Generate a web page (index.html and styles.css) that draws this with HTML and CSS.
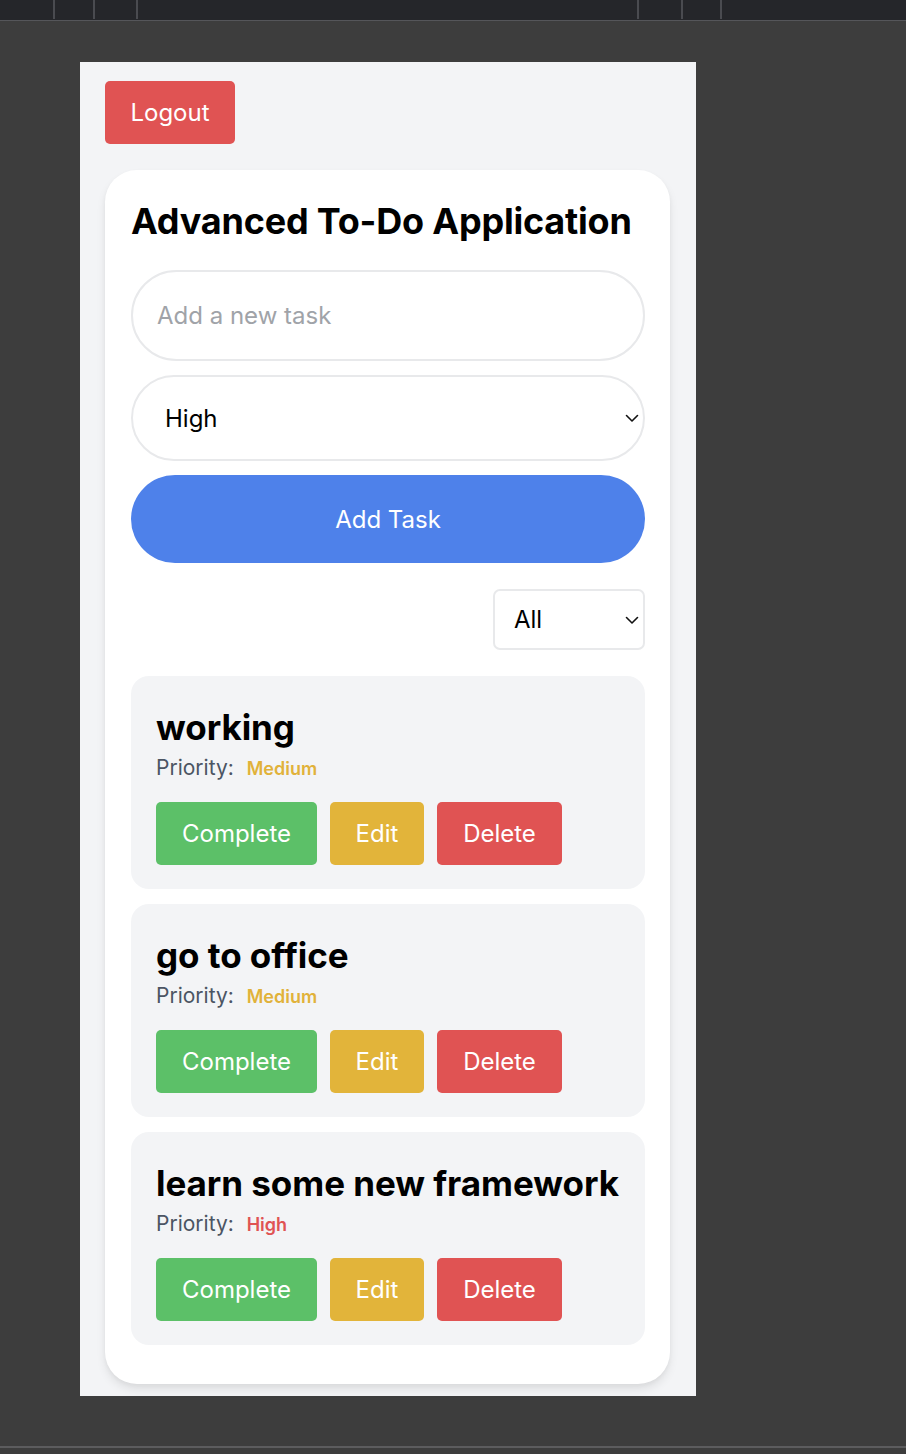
FILE: index.html
```html
<!DOCTYPE html>
<html lang="en">
<head>
<meta charset="utf-8">
<title>Advanced To-Do Application</title>
<link rel="stylesheet" href="styles.css">
</head>
<body>
<div class="topbar">
  <span class="tick t1"></span><span class="tick t2"></span><span class="tick t3"></span>
  <span class="tick t4"></span><span class="tick t5"></span><span class="tick t6"></span>
</div>
<div class="workspace">
  <div class="frame">
    <button class="logout">Logout</button>
    <div class="app">
      <h1 class="title">Advanced To-Do Application</h1>
      <input class="task-input" type="text" placeholder="Add a new task">
      <div class="select-wrap big">
        <select class="priority-select"><option>High</option><option>Medium</option><option>Low</option></select>
        <svg class="chev" width="14" height="9" viewBox="0 0 14 9"><path d="M1.5 1.5 L7 7 L12.5 1.5" fill="none" stroke="#111" stroke-width="1.6" stroke-linecap="round" stroke-linejoin="round"/></svg>
      </div>
      <button class="add-btn">Add Task</button>
      <div class="filter-row">
        <div class="select-wrap small">
          <select class="filter-select"><option>All</option><option>Completed</option><option>Pending</option></select>
          <svg class="chev" width="14" height="9" viewBox="0 0 14 9"><path d="M1.5 1.5 L7 7 L12.5 1.5" fill="none" stroke="#111" stroke-width="1.6" stroke-linecap="round" stroke-linejoin="round"/></svg>
        </div>
      </div>
      <ul class="tasks">
        <li class="task">
          <h3 class="task-title">working</h3>
          <p class="priority">Priority: <span class="level medium">Medium</span></p>
          <div class="actions">
            <button class="btn complete">Complete</button>
            <button class="btn edit">Edit</button>
            <button class="btn delete">Delete</button>
          </div>
        </li>
        <li class="task">
          <h3 class="task-title">go to office</h3>
          <p class="priority">Priority: <span class="level medium">Medium</span></p>
          <div class="actions">
            <button class="btn complete">Complete</button>
            <button class="btn edit">Edit</button>
            <button class="btn delete">Delete</button>
          </div>
        </li>
        <li class="task">
          <h3 class="task-title">learn some new framework</h3>
          <p class="priority">Priority: <span class="level high">High</span></p>
          <div class="actions">
            <button class="btn complete">Complete</button>
            <button class="btn edit">Edit</button>
            <button class="btn delete">Delete</button>
          </div>
        </li>
      </ul>
    </div>
  </div>
</div>
<div class="bottombar"></div>
</body>
</html>
```

FILE: styles.css
```css
* { box-sizing: border-box; }
html, body { margin: 0; padding: 0; }
body {
  width: 906px;
  height: 1454px;
  background: #3d3d3d;
  font-family: Inter, "Noto Sans", "Liberation Sans", sans-serif;
  overflow: hidden;
}
.topbar {
  position: relative;
  height: 21px;
  background: #25262a;
  border-bottom: 1px solid #55565a;
}
.tick {
  position: absolute;
  top: 0;
  width: 2px;
  height: 19px;
  background: #4a4b50;
}
.t1 { left: 53px; } .t2 { left: 93px; } .t3 { left: 136px; }
.t4 { left: 637px; } .t5 { left: 681px; } .t6 { left: 720px; }
.workspace {
  height: 1426px;
  padding-top: 41px;
  padding-left: 80px;
}
.frame {
  width: 616px;
  height: 1334px;
  background: #f3f4f6;
  padding: 19px 25px 0 25px;
}
.logout {
  display: block;
  width: 130px;
  height: 63px;
  background: #e05353;
  color: #fff;
  border: none;
  border-radius: 5px;
  font-family: inherit;
  font-size: 24px;
  padding: 0;
}
.app {
  margin-top: 26px;
  width: 565px;
  background: #fff;
  border-radius: 32px;
  box-shadow: 0 6px 10px rgba(0,0,0,0.08), 0 2px 4px rgba(0,0,0,0.04);
  padding: 29px 25px 39px 26px;
}
.title {
  margin: 0;
  font-size: 36px;
  line-height: 44px;
  font-weight: 700;
  color: #000;
  letter-spacing: -0.2px;
  white-space: nowrap;
}
.task-input {
  display: block;
  margin-top: 27px;
  width: 514px;
  height: 91px;
  border: 2px solid #e8e9eb;
  border-radius: 46px;
  padding: 0 0 0 24px;
  font-family: inherit;
  font-size: 24px;
  color: #111;
  background: #fff;
  outline: none;
}
.task-input::placeholder { color: #a0a3a8; }
.select-wrap { position: relative; }
.select-wrap.big { margin-top: 14px; width: 514px; height: 86px; }
.select-wrap select {
  appearance: none;
  -webkit-appearance: none;
  width: 100%;
  height: 100%;
  background: #fff;
  font-family: inherit;
  font-size: 24px;
  color: #000;
  outline: none;
}
.priority-select {
  border: 2px solid #e8e9eb;
  border-radius: 43px;
  padding: 0 0 0 32px;
}
.chev { position: absolute; right: 6px; top: 50%; margin-top: -4px; }
.add-btn {
  display: block;
  margin-top: 14px;
  width: 514px;
  height: 88px;
  background: #4e81ea;
  border: none;
  border-radius: 44px;
  color: #fff;
  font-family: inherit;
  font-size: 24px;
  padding: 0;
}
.filter-row {
  margin-top: 26px;
  width: 514px;
  display: flex;
  justify-content: flex-end;
}
.select-wrap.small { width: 152px; height: 61px; }
.filter-select {
  border: 2px solid #e8e9eb;
  border-radius: 7px;
  padding: 0 0 0 19px;
}
.tasks {
  list-style: none;
  margin: 26px 0 0 0;
  padding: 0;
  width: 514px;
  display: flex;
  flex-direction: column;
  gap: 15px;
}
.task {
  background: #f3f4f6;
  border-radius: 18px;
  padding: 29px 25px 24px 25px;
  height: 213px;
}
.task-title {
  margin: 0;
  font-size: 35px;
  line-height: 44px;
  font-weight: 700;
  color: #000;
  letter-spacing: -0.05px;
  white-space: nowrap;
}
.priority {
  margin: 4px 0 0 0;
  font-size: 21px;
  line-height: 30px;
  color: #4b5563;
}
.level {
  margin-left: 7px;
  font-size: 18px;
  font-weight: 600;
}
.level.medium { color: #e1b23a; }
.level.high { color: #e05353; }
.actions {
  margin-top: 18px;
  display: flex;
  gap: 13px;
}
.btn {
  height: 63px;
  border: none;
  border-radius: 5px;
  color: #fff;
  font-family: inherit;
  font-size: 24px;
  padding: 0;
}
.btn.complete { width: 161px; background: #5cc068; }
.btn.edit { width: 94px; background: #e2b43a; }
.btn.delete { width: 125px; background: #e05353; }
.bottombar {
  height: 2px;
  background: #5c5c5e;
  margin-top: -1px;
  position: relative;
}
```
